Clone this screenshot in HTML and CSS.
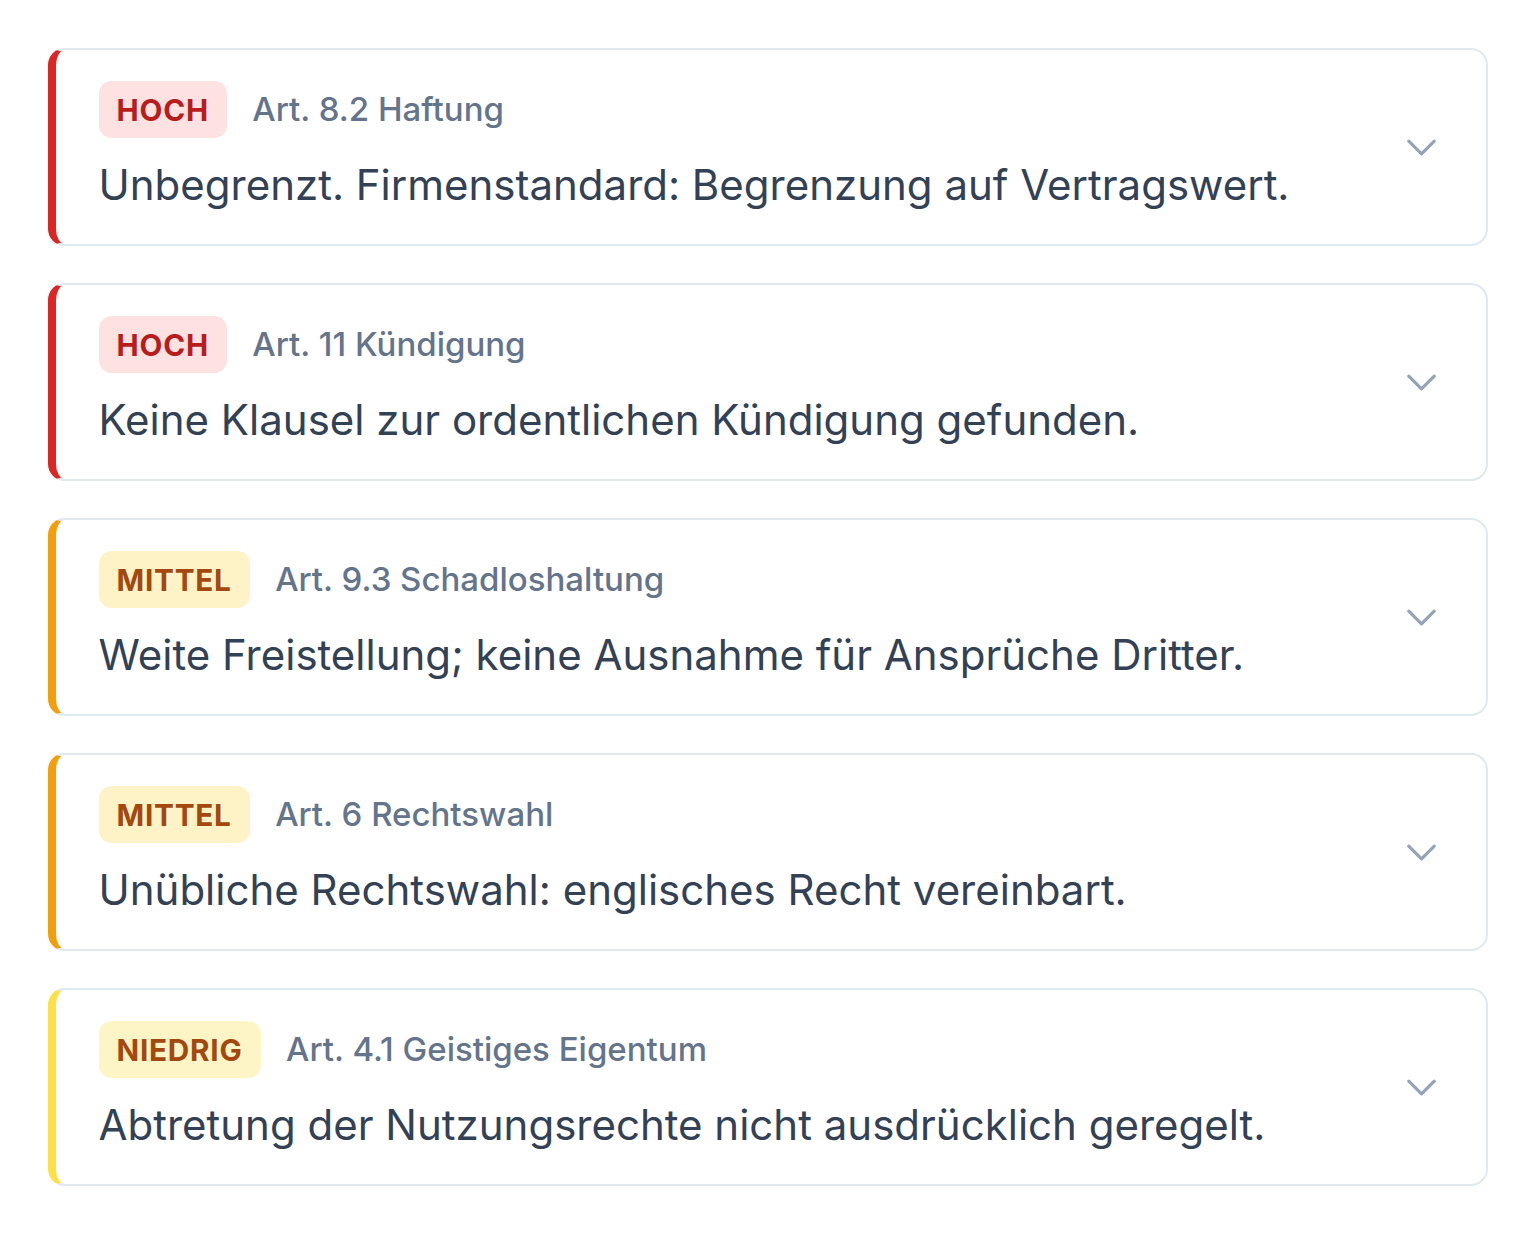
FILE: index.html
```html
<!DOCTYPE html>
<html lang="de">
<head>
<meta charset="utf-8">
<title>Vertragsrisiken</title>
<link rel="stylesheet" href="styles.css">
</head>
<body>
<main class="risk-list">
  <article class="risk risk--high">
    <div class="risk__body">
      <div class="risk__head">
        <span class="badge badge--high">HOCH</span>
        <span class="risk__ref">Art. 8.2 Haftung</span>
      </div>
      <p class="risk__text">Unbegrenzt. Firmenstandard: Begrenzung auf Vertragswert.</p>
    </div>
    <svg class="chevron" viewBox="0 0 24 24" fill="none" stroke="currentColor" stroke-width="1.5" stroke-linecap="round" stroke-linejoin="round"><path d="m6 9 6 6 6-6"/></svg>
  </article>

  <article class="risk risk--high">
    <div class="risk__body">
      <div class="risk__head">
        <span class="badge badge--high">HOCH</span>
        <span class="risk__ref">Art. 11 Kündigung</span>
      </div>
      <p class="risk__text">Keine Klausel zur ordentlichen Kündigung gefunden.</p>
    </div>
    <svg class="chevron" viewBox="0 0 24 24" fill="none" stroke="currentColor" stroke-width="1.5" stroke-linecap="round" stroke-linejoin="round"><path d="m6 9 6 6 6-6"/></svg>
  </article>

  <article class="risk risk--medium">
    <div class="risk__body">
      <div class="risk__head">
        <span class="badge badge--medium">MITTEL</span>
        <span class="risk__ref">Art. 9.3 Schadloshaltung</span>
      </div>
      <p class="risk__text">Weite Freistellung; keine Ausnahme für Ansprüche Dritter.</p>
    </div>
    <svg class="chevron" viewBox="0 0 24 24" fill="none" stroke="currentColor" stroke-width="1.5" stroke-linecap="round" stroke-linejoin="round"><path d="m6 9 6 6 6-6"/></svg>
  </article>

  <article class="risk risk--medium">
    <div class="risk__body">
      <div class="risk__head">
        <span class="badge badge--medium">MITTEL</span>
        <span class="risk__ref">Art. 6 Rechtswahl</span>
      </div>
      <p class="risk__text">Unübliche Rechtswahl: englisches Recht vereinbart.</p>
    </div>
    <svg class="chevron" viewBox="0 0 24 24" fill="none" stroke="currentColor" stroke-width="1.5" stroke-linecap="round" stroke-linejoin="round"><path d="m6 9 6 6 6-6"/></svg>
  </article>

  <article class="risk risk--low">
    <div class="risk__body">
      <div class="risk__head">
        <span class="badge badge--low">NIEDRIG</span>
        <span class="risk__ref">Art. 4.1 Geistiges Eigentum</span>
      </div>
      <p class="risk__text">Abtretung der Nutzungsrechte nicht ausdrücklich geregelt.</p>
    </div>
    <svg class="chevron" viewBox="0 0 24 24" fill="none" stroke="currentColor" stroke-width="1.5" stroke-linecap="round" stroke-linejoin="round"><path d="m6 9 6 6 6-6"/></svg>
  </article>
</main>
</body>
</html>
```

FILE: styles.css
```css
* {
  box-sizing: border-box;
}

html, body {
  margin: 0;
  padding: 0;
  background: #ffffff;
}

body {
  font-family: Inter, "Noto Sans", "Liberation Sans", sans-serif;
  color: #334155;
}

.risk-list {
  display: flex;
  flex-direction: column;
  gap: 37px;
  padding: 48px 48px 0 48px;
}

.risk {
  display: flex;
  align-items: center;
  gap: 24px;
  background: #ffffff;
  border: 2px solid #e2e8f0;
  border-left-width: 8.5px;
  border-radius: 17px;
  padding: 31px 39px 31px 42.5px;
}

.risk--high { border-left-color: #dc2626; }
.risk--medium { border-left-color: #f59e0b; }
.risk--low { border-left-color: #fde047; }

.risk__body {
  flex: 1;
  min-width: 0;
}

.risk__head {
  display: flex;
  align-items: center;
  gap: 25.5px;
}

.badge {
  display: inline-block;
  font-size: 29.75px;
  font-weight: 700;
  letter-spacing: 0.025em;
  line-height: 40px;
  padding: 8.5px 18px;
  border-radius: 12.75px;
}

.badge--high {
  background: #fee2e2;
  color: #b91c1c;
}

.badge--medium {
  background: #fef3c7;
  color: #a3480e;
}

.badge--low {
  background: #fef5c6;
  color: #a3480e;
}

.risk__ref {
  font-size: 33px;
  font-weight: 500;
  color: #64748b;
  line-height: 51px;
}

.risk__text {
  margin: 18px 0 0 0;
  font-size: 42px;
  line-height: 57px;
  color: #334155;
}

.chevron {
  flex: none;
  width: 51px;
  height: 51px;
  color: #94a3b8;
}
```
